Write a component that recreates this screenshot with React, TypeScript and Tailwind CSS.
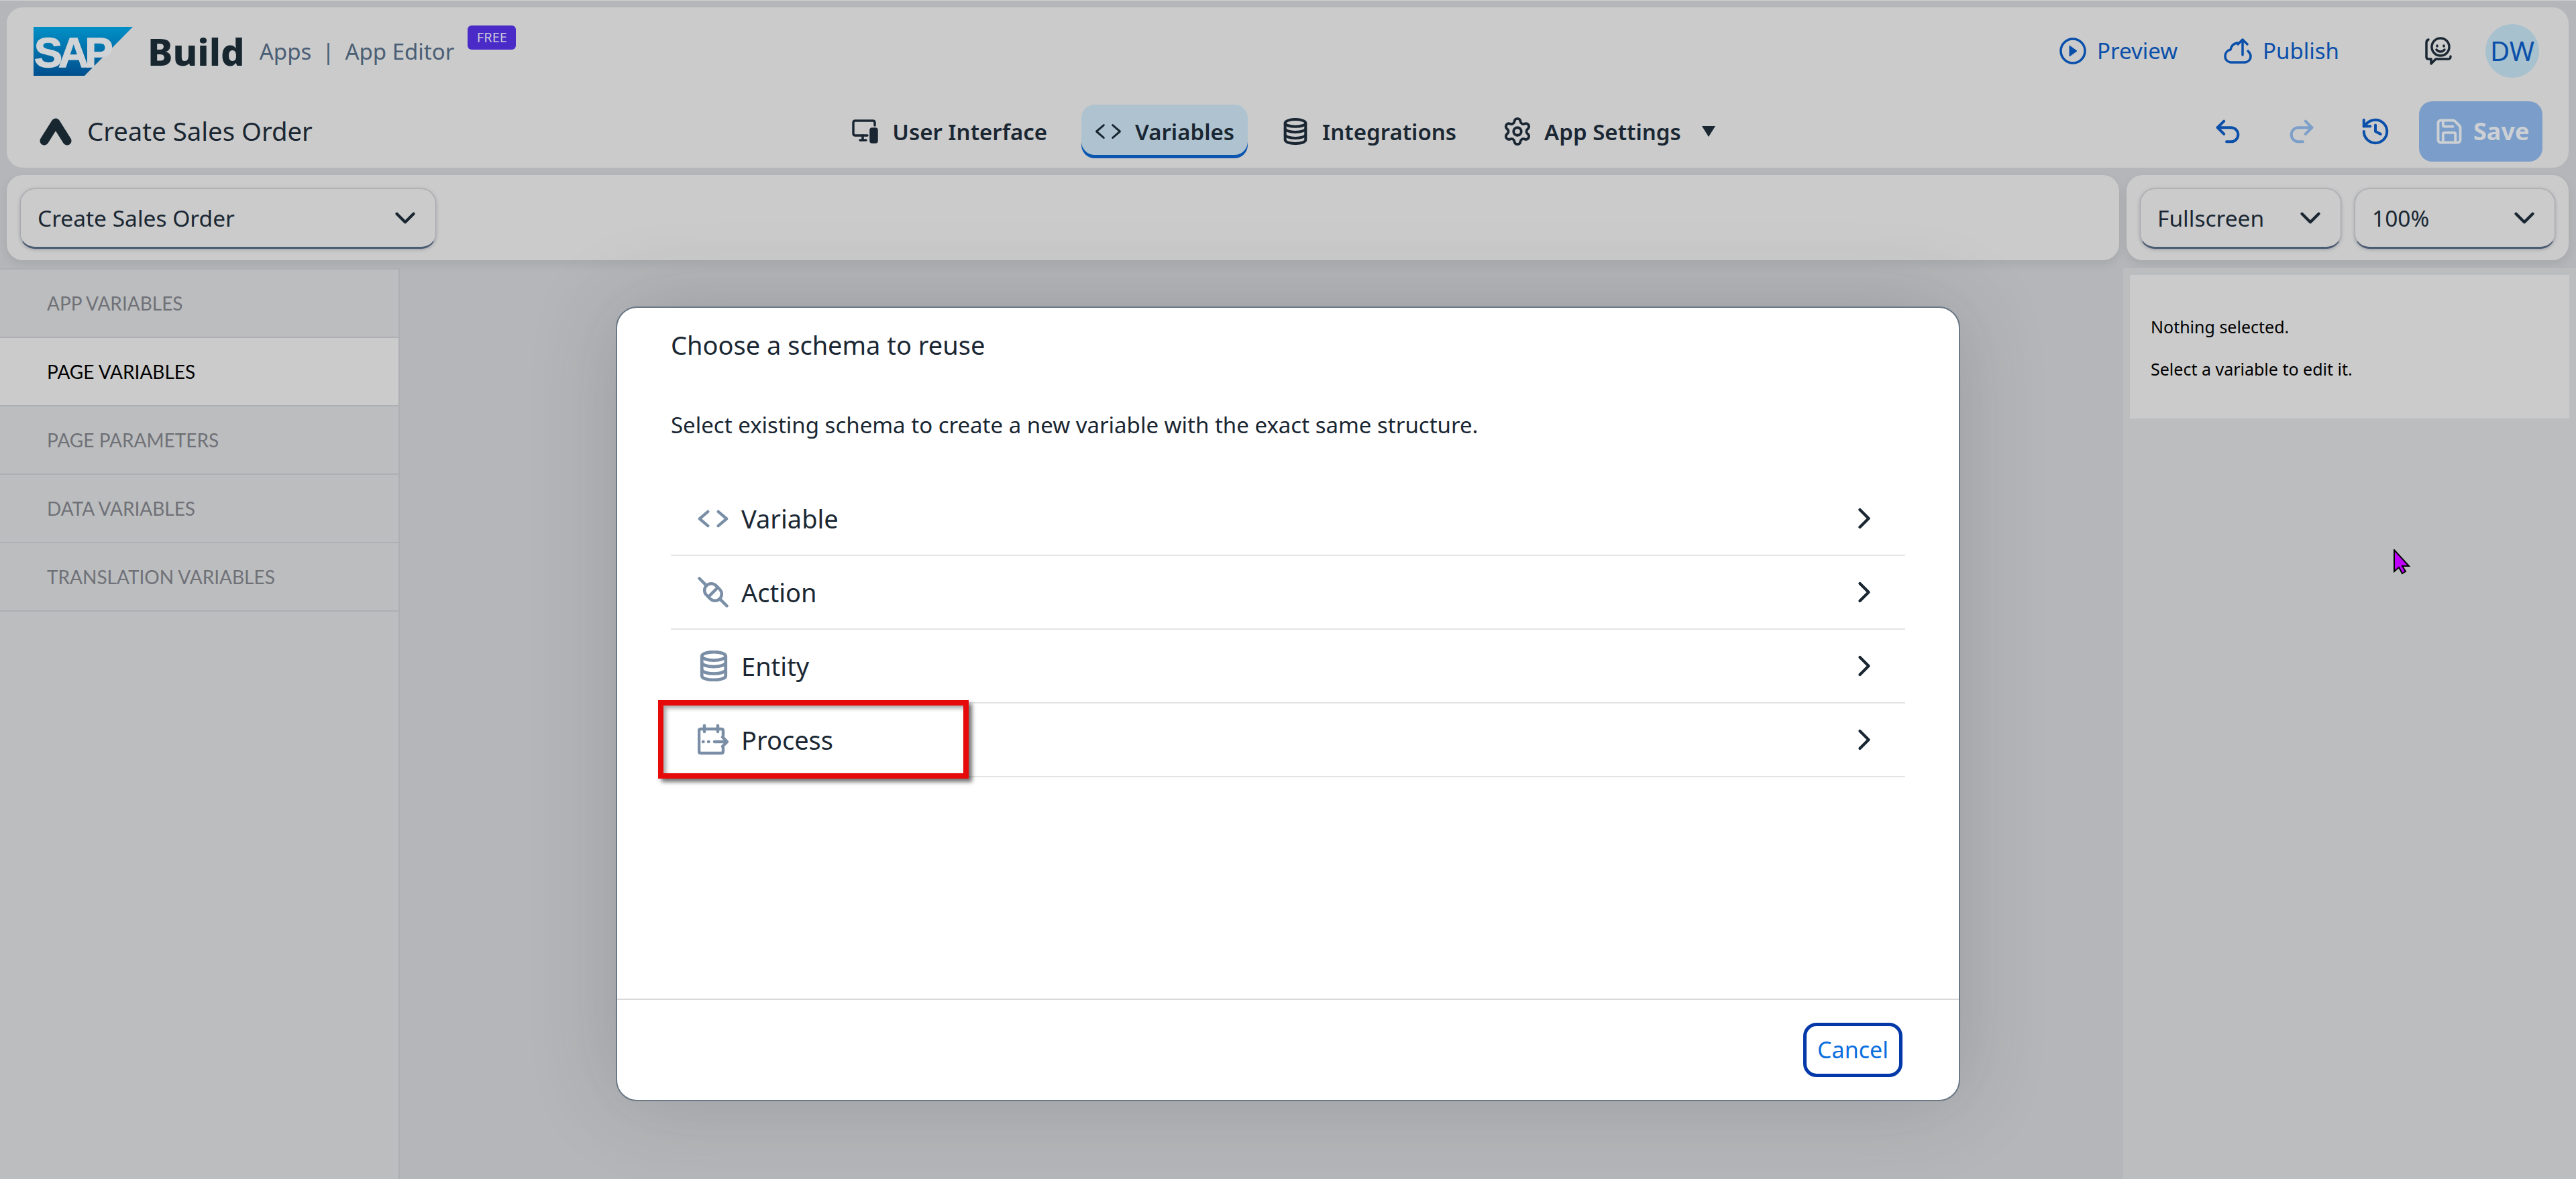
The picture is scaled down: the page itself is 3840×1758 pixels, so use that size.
import React from "react";
import { ChevronDown, ChevronRight, Undo2, Redo2, History, Save, Settings } from "lucide-react";

const Code = ({ c, w, h, sw }: { c: string; w: number; h: number; sw: number }) => (
  <svg width={w} height={h} viewBox="0 0 48 28" preserveAspectRatio="none" fill="none" stroke={c} strokeWidth={sw} strokeLinecap="round" strokeLinejoin="round">
    <path d="M16 3 3 14l13 11M32 3l13 11-13 11" />
  </svg>
);

const Db = ({ c, w, h, sw }: { c: string; w: number; h: number; sw: number }) => (
  <svg width={w} height={h} viewBox="0 0 40 44" fill="none" stroke={c} strokeWidth={sw} strokeLinejoin="round">
    <ellipse cx="20" cy="8" rx="17" ry="6" />
    <path d="M3 8v28c0 3.500 7.500 6 17 6s17-2.500 17-6V8" />
    <path d="M3 17c0 3.500 7.500 6 17 6s17-2.500 17-6M3 27c0 3.500 7.500 6 17 6s17-2.500 17-6" />
  </svg>
);

function Select({ label, className }: { label: string; className: string }) {
  return (
    <div className={`h-[90px] flex items-center justify-between pr-[20px] rounded-[22px] bg-[#cbcbcb] border border-[#a6a8ae] border-b-[3px] border-b-[#4a5b72] shadow-[0_1px_5px_rgba(60,70,85,0.35)] text-[33.5px] text-[#1a2733] ${className}`}>
      <span>{label}</span>
      <ChevronDown size={50} strokeWidth={2.1} color="#1a2733" />
    </div>
  );
}

function NavItem({ icon, label, active }: { icon: React.ReactNode; label: string; active?: boolean }) {
  return (
    <div className={`h-[80px] flex items-center gap-[20px] px-[20px] text-[33px] font-semibold text-[#1a2733] rounded-[20px] ${active ? "bg-[#aec3cf] shadow-[inset_0_-5px_0_#0a55b0]" : ""}`}>
      <div className="w-[40px] flex justify-center">{icon}</div>
      <span className="pt-[2px]">{label}</span>
    </div>
  );
}

function SideRow({ label, active }: { label: string; active?: boolean }) {
  return (
    <div className={`h-[102px] flex items-center pl-[70px] text-[28px] font-['Lato',sans-serif] border-b-2 border-b-[#aeafb3] ${active ? "bg-[#cbcbcb] text-black" : "text-[#6f7177]"}`}>
      {label}
    </div>
  );
}

function SchemaRow({ icon, label }: { icon: React.ReactNode; label: string }) {
  return (
    <div className="h-[110px] flex items-center border-b-2 border-b-[#e4e4e4] text-[38px] text-[#1a2733]">
      <div className="w-[105px] flex pl-[40px]">{icon}</div>
      <span className="flex-1">{label}</span>
      <ChevronRight size={52} strokeWidth={2} color="#1a2733" className="mr-[35px]" />
    </div>
  );
}

export default function App() {
  return (
    <div className="relative w-[3840px] h-[1758px] overflow-hidden bg-[#b5b6b9] border-t border-t-[#cfcfcf] pt-[10px] flex flex-col font-['Noto_Sans',sans-serif]">
      {/* header */}
      <header className="ml-[10px] w-[3819px] h-[239px] rounded-[24px] bg-[#cbcbcb] pt-[25px] flex flex-col">
        <div className="h-[80px] flex items-center pl-[40px] pr-[44px]">
          <svg width="148" height="73" viewBox="0 0 148 73">
            <defs>
              <linearGradient id="sap" x1="0" y1="0" x2="0" y2="1">
                <stop offset="0" stopColor="#0090c6" />
                <stop offset="1" stopColor="#004f8e" />
              </linearGradient>
            </defs>
            <polygon points="0,0 148,0 76,73 0,73" fill="url(#sap)" />
            <text x="1" y="60" fontFamily="Liberation Sans" fontWeight="700" fontSize="63" letterSpacing="-6" fill="#d0d4d6" stroke="#d0d4d6" strokeWidth="1.5">SAP</text>
          </svg>
          <span className="ml-[22px] text-[56px] leading-none font-extrabold text-[#17262f]">Build</span>
          <span className="ml-[22px] text-[33px] text-[#4a5e75] mt-[2px]">Apps</span>
          <span className="ml-[16px] text-[33px] text-[#4a5e75] mt-[2px]">|</span>
          <span className="ml-[16px] text-[33px] text-[#4a5e75] mt-[2px]">App Editor</span>
          <span className="ml-[20px] self-start mt-[2px] w-[72px] h-[36px] rounded-[6px] bg-[#4a2bc8] text-[#c8c8d8] text-[20px] flex items-center justify-center">FREE</span>
          <div className="ml-auto flex items-center text-[33px] text-[#0a4faa]">
            <svg width="40" height="40" viewBox="0 0 40 40" fill="none" stroke="#0a4faa" strokeWidth="3.500">
              <circle cx="20" cy="20" r="18" />
              <path d="M15 12l11 8-11 8z" fill="#0a4faa" strokeWidth="1" strokeLinejoin="round" />
            </svg>
            <span className="ml-[16px]">Preview</span>
            <svg className="ml-[69px]" width="42" height="40" viewBox="0 0 42 40" fill="none" stroke="#0a4faa" strokeWidth="3.500" strokeLinecap="round" strokeLinejoin="round">
              <path d="M28 26V3M21 10l7-7 7 7" />
              <path d="M20 8c-6 1-9 5-10 10-5 1-8 5-8 10 0 5 4 9 9 9h20c5 0 9-4 9-9 0-3-2-6-4-8" />
            </svg>
            <span className="ml-[16px]">Publish</span>
            <svg className="ml-[128px]" width="40" height="42" viewBox="0 0 40 42" fill="none" stroke="#1a2733" strokeWidth="3.500" strokeLinecap="round" strokeLinejoin="round">
              <circle cx="23" cy="15" r="13" />
              <path d="M18 13v1M28 13v1M17 19c3 4 9 4 12 0" />
              <path d="M5 4C2 5 2 7 2 9v21c0 2 1 3 3 3h4v7l7-7h18c3 0 4-1 4-4" />
            </svg>
            <div className="ml-[50px] w-[80px] h-[80px] rounded-full bg-[#a7c1cf] flex items-center justify-center text-[40px]">DW</div>
          </div>
        </div>
        <div className="mt-[35px] h-[90px] grid grid-cols-[1fr_auto_1fr] items-center pl-[49px] pr-[39px]">
          <div className="flex items-center">
            <svg width="48" height="42" viewBox="0 0 48 42" fill="none" stroke="#17262f" strokeWidth="13" strokeLinecap="round" strokeLinejoin="round">
              <path d="M7 35 24 8l17 27" />
            </svg>
            <span className="ml-[23px] text-[38.3px] text-[#1a2733]">Create Sales Order</span>
          </div>
          <nav className="flex items-center gap-[31px]">
            <NavItem
              label="User Interface"
              icon={
                <svg width="40" height="36" viewBox="0 0 40 36" fill="none" stroke="#1a2733" strokeWidth="3.500" strokeLinejoin="round" strokeLinecap="round">
                  <path d="M23 24H5c-2 0-3-1-3-3V5c0-2 1-3 3-3h26c2 0 3 1 3 3v4" />
                  <path d="M12 31h9M16 24v7" />
                  <rect x="28" y="14" width="9" height="20" rx="2" fill="#1a2733" />
                </svg>
              }
            />
            <NavItem active label="Variables" icon={<Code c="#1a2733" w={41} h={24} sw={3.5} />} />
            <NavItem label="Integrations" icon={<Db c="#1a2733" w={36} h={40} sw={4.500} />} />
            <NavItem label="App Settings" icon={<div className="-mx-[3px]"><Settings size={46} strokeWidth={2} color="#1a2733" /></div>} />
            <svg width="22" height="18" viewBox="0 0 22 18" className="-ml-[21px] mr-[41px]"><path d="M1 1h20L11 17z" fill="#1a2733" /></svg>
          </nav>
          <div className="flex items-center justify-end">
            <Undo2 size={46} strokeWidth={2.1} color="#0a4faa" />
            <Redo2 size={46} strokeWidth={2.1} color="#7c9fca" className="ml-[64px]" />
            <History size={46} strokeWidth={2.1} color="#0a4faa" className="ml-[64px]" />
            <div className="ml-[42px] w-[184px] h-[90px] rounded-[20px] bg-[#7b9dc9] flex items-center pl-[23px] gap-[14px]">
              <Save size={44} strokeWidth={2.1} color="#ccd0d4" />
              <span className="text-[36px] font-bold text-[#ccd0d4]">Save</span>
            </div>
          </div>
        </div>
      </header>

      {/* toolbar */}
      <div className="ml-[10px] w-[3819px] mt-[11px] h-[127px] flex gap-[11px]">
        <div className="flex-1 rounded-[24px] bg-[#cbcbcb] px-[20px] py-[20px] shadow-[0_6px_14px_rgba(0,0,0,0.08)]">
          <Select label="Create Sales Order" className="w-[620px] pl-[25px]" />
        </div>
        <div className="w-[659px] rounded-[24px] bg-[#cbcbcb] p-[20px] flex gap-[20px] shadow-[0_6px_14px_rgba(0,0,0,0.08)]">
          <Select label="Fullscreen" className="w-[300px] pl-[25px]" />
          <Select label="100%" className="w-[299px] pl-[25px]" />
        </div>
      </div>

      {/* body */}
      <div className="mt-[12px] flex-1 flex min-h-0">
        <aside className="w-[596px] bg-[#bcbdbf] border-r-2 border-r-[#aeafb3] border-t-2 border-t-[#aeafb3]">
          <SideRow label="APP VARIABLES" />
          <SideRow active label="PAGE VARIABLES" />
          <SideRow label="PAGE PARAMETERS" />
          <SideRow label="DATA VARIABLES" />
          <SideRow label="TRANSLATION VARIABLES" />
        </aside>
        <main className="flex-1" />
        <aside className="w-[675px] bg-[#bcbdbf] pt-[10px] pl-[10px] pr-[10px]">
          <div className="h-[214px] bg-[#cbcbcb] pl-[31px] pt-[58px] text-[25px] leading-[38px] text-black">
            <p>Nothing selected.</p>
            <p className="mt-[25px]">Select a variable to edit it.</p>
          </div>
        </aside>
      </div>

      {/* cursor */}
      <svg className="absolute left-[3568px] top-[818px]" width="26" height="38" viewBox="0 0 26 38">
        <path d="M1 1v32l7-6 5 9 5-3-5-8h10z" fill="#c000ff" stroke="#000" strokeWidth="2" />
      </svg>

      {/* modal */}
      <div className="absolute left-[918px] top-[456px] w-[2004px] h-[1185px] rounded-[32px] bg-white border-2 border-[#6a7885] shadow-[0_0_130px_rgba(40,44,54,0.2)] flex flex-col">
        <div className="flex-1 pl-[80px] pr-[80px]">
          <h2 className="mt-[29px] text-[38px] leading-[52px] text-[#1a2733]">Choose a schema to reuse</h2>
          <p className="mt-[72px] text-[33px] leading-[44px] text-[#1a2733]">Select existing schema to create a new variable with the exact same structure.</p>
          <div className="mt-[63px]">
            <SchemaRow label="Variable" icon={<Code c="#7a8ea6" w={46} h={27} sw={4.5} />} />
            <SchemaRow
              label="Action"
              icon={
                <svg width="46" height="46" viewBox="0 0 46 46" fill="none" stroke="#7a8ea6" strokeWidth="4.500" strokeLinecap="round" strokeLinejoin="round">
                  <g transform="rotate(-45 23 23)">
                    <path d="M23 -6V9M23 37V52M13 23h20" />
                    <rect x="13" y="9" width="20" height="28" rx="10" />
                  </g>
                </svg>
              }
            />
            <SchemaRow label="Entity" icon={<div className="ml-[3px]"><Db c="#7a8ea6" w={42} h={46} sw={4.5} /></div>} />
            <SchemaRow
              label="Process"
              icon={
                <svg width="46" height="46" viewBox="0 0 46 46" fill="none" stroke="#7a8ea6" strokeWidth="4.500" strokeLinecap="round" strokeLinejoin="round">
                  <path d="M38 17V10c0-2-1-3-3-3H5c-2 0-3 1-3 3v30c0 2 1 3 3 3h30c2 0 3-1 3-3v-5" />
                  <path d="M10 2v9M30 2v9" />
                  <path d="M8 26h.5M16 26h.5M25 26h18M37 19l7 7-7 7" />
                </svg>
              }
            />
          </div>
        </div>
        <footer className="h-[151px] border-t-2 border-t-[#d8d8d8] flex items-center justify-end pr-[84px]">
          <button className="w-[148px] h-[81px] rounded-[20px] border-[5px] border-[#0338a8] text-[34px] text-[#0a6ee0] bg-white">Cancel</button>
        </footer>
      </div>

      {/* callout */}
      <div className="absolute left-[981px] top-[1043px] w-[463px] h-[117px] border-[8px] border-[#e60a0a] shadow-[5px_5px_6px_rgba(0,0,0,0.55),inset_4px_4px_6px_rgba(0,0,0,0.35)]" />
    </div>
  );
}
